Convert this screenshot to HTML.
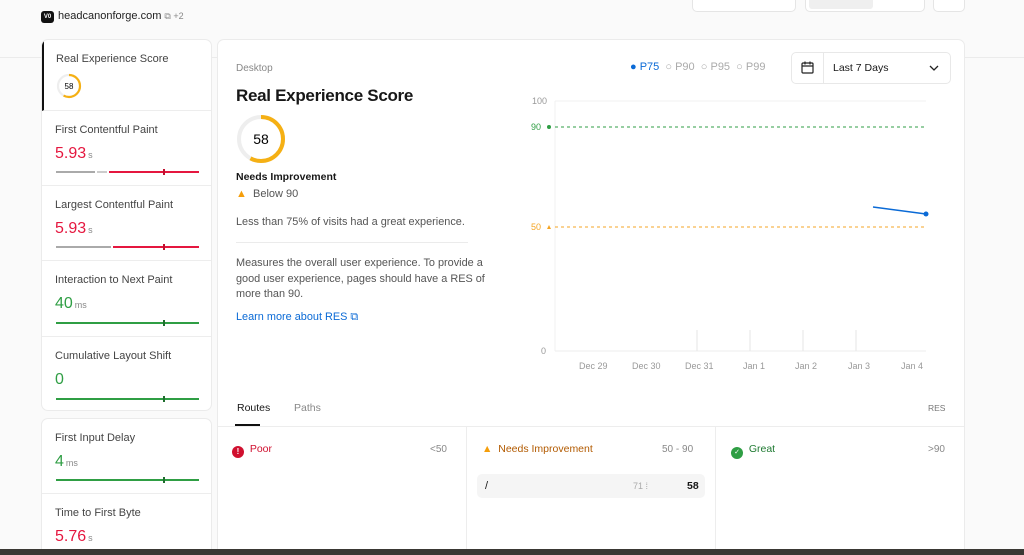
<!DOCTYPE html>
<html style="width:1024px;height:555px;overflow:hidden"><head><meta charset="utf-8"><style>
*{box-sizing:border-box;margin:0;padding:0}
body{width:1024px;height:555px;overflow:hidden;background:#fafafa;font-family:"Liberation Sans",sans-serif;color:#171717;position:relative}
.abs{position:absolute}
.card{position:absolute;background:#fff;border:1px solid #ebebeb;border-radius:7px;overflow:hidden}
.it{position:absolute;left:0;width:169px;border-bottom:1px solid #ededed;padding:13px 0 0 13px}
.it .t{font-size:11px;color:#444}
.it .v{font-size:16px;margin-top:9px}
.it .v small{font-size:9px;color:#888;margin-left:2px}
.bar{position:absolute;left:14px;width:143px;height:2px}
.tick{position:absolute;width:1.5px;height:6px;top:-2px}
.red{color:#e5173f}.grn{color:#2f9e44}
.ax{font-size:9px;color:#999;position:absolute}
</style></head><body>
<div class="abs" style="left:0;top:57px;width:1024px;height:1px;background:#ebebeb"></div>
<div class="abs" style="left:41px;top:11px;width:13px;height:12px;background:#111;border-radius:3px;color:#fff;font-size:6px;font-weight:bold;text-align:center;line-height:12px">V0</div>
<div class="abs" style="left:58px;top:10px;font-size:11px;color:#222">headcanonforge.com <span style="color:#888;font-size:9px">⧉ +2</span></div>
<div class="abs" style="left:692px;top:-8px;width:104px;height:20px;background:#fff;border:1px solid #e5e5e5;border-radius:5px"></div>
<div class="abs" style="left:805px;top:-8px;width:120px;height:20px;background:#fff;border:1px solid #e5e5e5;border-radius:5px"><div style="position:absolute;left:3px;top:0;width:64px;height:16px;background:#efefef;border-radius:3px"></div></div>
<div class="abs" style="left:933px;top:-8px;width:32px;height:20px;background:#fff;border:1px solid #e5e5e5;border-radius:5px"></div>

<div class="card" style="left:41px;top:39px;width:171px;height:372px">
 <div class="it" style="top:0;height:71px;border-left:2px solid #111;padding-left:12px">
  <div class="t">Real Experience Score</div>
  <svg class="abs" style="left:12px;top:33px" width="26" height="26" viewBox="0 0 26 26"><circle cx="13" cy="13" r="11" fill="none" stroke="#eee" stroke-width="2.2"/><circle cx="13" cy="13" r="11" fill="none" stroke="#f5b014" stroke-width="2.2" stroke-dasharray="40 69" transform="rotate(-90 13 13)"/><text x="13" y="16" font-size="8" text-anchor="middle" font-family="Liberation Sans">58</text></svg>
 </div>
 <div class="it" style="top:71px;height:75px"><div class="t">First Contentful Paint</div><div class="v red">5.93<small>s</small></div>
  <div class="bar" style="top:60px;background:none"><div class="abs" style="left:0;width:39px;height:2px;background:#aaa"></div><div class="abs" style="left:41px;width:10px;height:2px;background:#ccc"></div><div class="abs" style="left:53px;width:90px;height:2px;background:#e5173f"></div><div class="tick" style="left:107px;background:#c0102f"></div></div></div>
 <div class="it" style="top:146px;height:75px"><div class="t">Largest Contentful Paint</div><div class="v red">5.93<small>s</small></div>
  <div class="bar" style="top:60px"><div class="abs" style="left:0;width:55px;height:2px;background:#aaa"></div><div class="abs" style="left:57px;width:86px;height:2px;background:#e5173f"></div><div class="tick" style="left:107px;background:#c0102f"></div></div></div>
 <div class="it" style="top:221px;height:76px"><div class="t">Interaction to Next Paint</div><div class="v grn">40<small>ms</small></div>
  <div class="bar" style="top:61px;background:#2f9e44"><div class="tick" style="left:107px;background:#1f6e2e"></div></div></div>
 <div class="it" style="top:297px;height:74px;border:none"><div class="t">Cumulative Layout Shift</div><div class="v grn">0</div>
  <div class="bar" style="top:61px;background:#2f9e44"><div class="tick" style="left:107px;background:#1f6e2e"></div></div></div>
</div>
<div class="card" style="left:41px;top:418px;width:171px;height:137px;border-bottom:none;border-radius:7px 7px 0 0">
 <div class="it" style="top:0;height:75px"><div class="t">First Input Delay</div><div class="v grn">4<small>ms</small></div>
  <div class="bar" style="top:60px;background:#2f9e44"><div class="tick" style="left:107px;background:#1f6e2e"></div></div></div>
 <div class="it" style="top:75px;height:62px;border:none"><div class="t">Time to First Byte</div><div class="v red">5.76<small>s</small></div></div>
</div>

<div class="card" style="left:217px;top:39px;width:748px;height:516px;border-bottom:none;border-radius:7px 7px 0 0">
 <div class="abs" style="left:18px;top:23px;font-size:10px;color:#888">Desktop</div>
 <div class="abs" style="left:18px;top:46px;font-size:17px;font-weight:bold;letter-spacing:-0.3px">Real Experience Score</div>
 <svg class="abs" style="left:17px;top:73px" width="52" height="52" viewBox="0 0 52 52"><circle cx="26" cy="26" r="22" fill="none" stroke="#eee" stroke-width="4"/><circle cx="26" cy="26" r="22" fill="none" stroke="#f5b014" stroke-width="4" stroke-dasharray="80 139" transform="rotate(-90 26 26)"/><text x="26" y="31" font-size="14" text-anchor="middle" font-family="Liberation Sans">58</text></svg>
 <div class="abs" style="left:18px;top:131px;font-size:10.5px;font-weight:bold">Needs Improvement</div>
 <div class="abs" style="left:18px;top:148px;font-size:11px;color:#555"><span style="color:#f59e0b">▲</span>&nbsp; Below 90</div>
 <div class="abs" style="left:18px;top:176px;font-size:10.9px;color:#555">Less than 75% of visits had a great experience.</div>
 <div class="abs" style="left:18px;top:202px;width:232px;height:1px;background:#ebebeb"></div>
 <div class="abs" style="left:18px;top:216px;width:252px;font-size:10.9px;color:#555;line-height:15.5px">Measures the overall user experience. To provide a good user experience, pages should have a RES of more than 90.</div>
 <div class="abs" style="left:18px;top:271px;font-size:10.9px;color:#0a6ad6">Learn more about RES ⧉</div>

 <div class="abs" style="left:412px;top:21px;font-size:11px;color:#aaa"><span style="color:#0a6ad6">● P75</span> &nbsp;○ P90 &nbsp;○ P95 &nbsp;○ P99</div>
 <div class="abs" style="left:573px;top:12px;width:160px;height:32px;border:1px solid #e8e8e8;border-radius:5px">
  <div class="abs" style="left:31px;top:0;width:1px;height:30px;background:#e8e8e8"></div>
  <svg class="abs" style="left:9px;top:8px" width="13" height="13" viewBox="0 0 13 13" fill="none" stroke="#222" stroke-width="1.2"><rect x="1" y="2" width="11" height="10" rx="1"/><path d="M1 5h11M4 0.5v3M9 0.5v3"/></svg>
  <div class="abs" style="left:41px;top:9px;font-size:10.5px">Last 7 Days</div>
  <svg class="abs" style="left:137px;top:11px" width="10" height="8" viewBox="0 0 10 8" fill="none" stroke="#222" stroke-width="1.3"><path d="M1 2l4 4 4-4"/></svg>
 </div>

 <svg class="abs" style="left:290px;top:50px" width="440" height="290" viewBox="290 50 440 290">
  <line x1="337" y1="61" x2="708" y2="61" stroke="#f0f0f0"/>
  <line x1="337" y1="61" x2="337" y2="311" stroke="#f0f0f0"/>
  <line x1="337" y1="311" x2="708" y2="311" stroke="#eee"/>
  <line x1="337" y1="87" x2="708" y2="87" stroke="#2f9e44" stroke-dasharray="3 3"/>
  <line x1="337" y1="187" x2="708" y2="187" stroke="#f5a524" stroke-dasharray="3 3"/>
  <g stroke="#e5e5e5"><line x1="479" y1="290" x2="479" y2="311"/><line x1="532" y1="290" x2="532" y2="311"/><line x1="585" y1="290" x2="585" y2="311"/><line x1="638" y1="290" x2="638" y2="311"/></g>
  <line x1="655" y1="167" x2="708" y2="174" stroke="#0a6ad6" stroke-width="1.5"/>
  <circle cx="708" cy="174" r="2.5" fill="#0a6ad6"/>
  <circle cx="331" cy="87" r="2" fill="#2f9e44"/>
  <path d="M329 189l2-4 2 4z" fill="#f5a524"/>
 </svg>
 <div class="ax" style="left:314px;top:56px">100</div>
 <div class="ax" style="left:313px;top:82px;color:#2f9e44">90</div>
 <div class="ax" style="left:313px;top:182px;color:#f5a524">50</div>
 <div class="ax" style="left:323px;top:306px">0</div>
 <div class="ax" style="left:361px;top:321px">Dec 29</div>
 <div class="ax" style="left:414px;top:321px">Dec 30</div>
 <div class="ax" style="left:467px;top:321px">Dec 31</div>
 <div class="ax" style="left:525px;top:321px">Jan 1</div>
 <div class="ax" style="left:577px;top:321px">Jan 2</div>
 <div class="ax" style="left:630px;top:321px">Jan 3</div>
 <div class="ax" style="left:683px;top:321px">Jan 4</div>

 <div class="abs" style="left:19px;top:362px;font-size:10.5px">Routes</div>
 <div class="abs" style="left:17px;top:384px;width:25px;height:2px;background:#111"></div>
 <div class="abs" style="left:76px;top:362px;font-size:10.5px;color:#888">Paths</div>
 <div class="abs" style="left:710px;top:363px;font-size:8.5px;color:#777">RES</div>
 <div class="abs" style="left:0;top:386px;width:746px;height:1px;background:#ededed"></div>
 <div class="abs" style="left:248px;top:387px;width:1px;height:150px;background:#ededed"></div>
 <div class="abs" style="left:497px;top:387px;width:1px;height:150px;background:#ededed"></div>
 <div class="abs" style="left:14px;top:403px;font-size:10.5px;color:#d0102f"><span style="display:inline-block;width:12px;height:12px;border-radius:50%;background:#d0102f;color:#fff;font-size:8px;text-align:center;line-height:12px;font-weight:bold;vertical-align:-2px">!</span>&nbsp; Poor</div>
 <div class="abs" style="left:212px;top:404px;font-size:10px;color:#888">&lt;50</div>
 <div class="abs" style="left:264px;top:403px;font-size:10.5px;color:#b25a00"><span style="color:#f59e0b">▲</span>&nbsp; Needs Improvement</div>
 <div class="abs" style="left:444px;top:404px;font-size:10px;color:#888">50 - 90</div>
 <div class="abs" style="left:513px;top:403px;font-size:10.5px;color:#1f7a32"><span style="display:inline-block;width:12px;height:12px;border-radius:50%;background:#2f9e44;color:#fff;font-size:7px;text-align:center;line-height:12px;vertical-align:-2px">✓</span>&nbsp; Great</div>
 <div class="abs" style="left:710px;top:404px;font-size:10px;color:#888">&gt;90</div>
 <div class="abs" style="left:259px;top:434px;width:228px;height:24px;background:#f5f5f5;border-radius:5px">
  <div class="abs" style="left:8px;top:6px;font-size:11px">/</div>
  <div class="abs" style="left:156px;top:7px;font-size:9px;color:#aaa">71 ⁞</div>
  <div class="abs" style="left:210px;top:6px;font-size:10.5px;font-weight:bold">58</div>
 </div>
</div>
<div class="abs" style="left:0;top:549px;width:1024px;height:6px;background:#3a3834"></div>
</body></html>
